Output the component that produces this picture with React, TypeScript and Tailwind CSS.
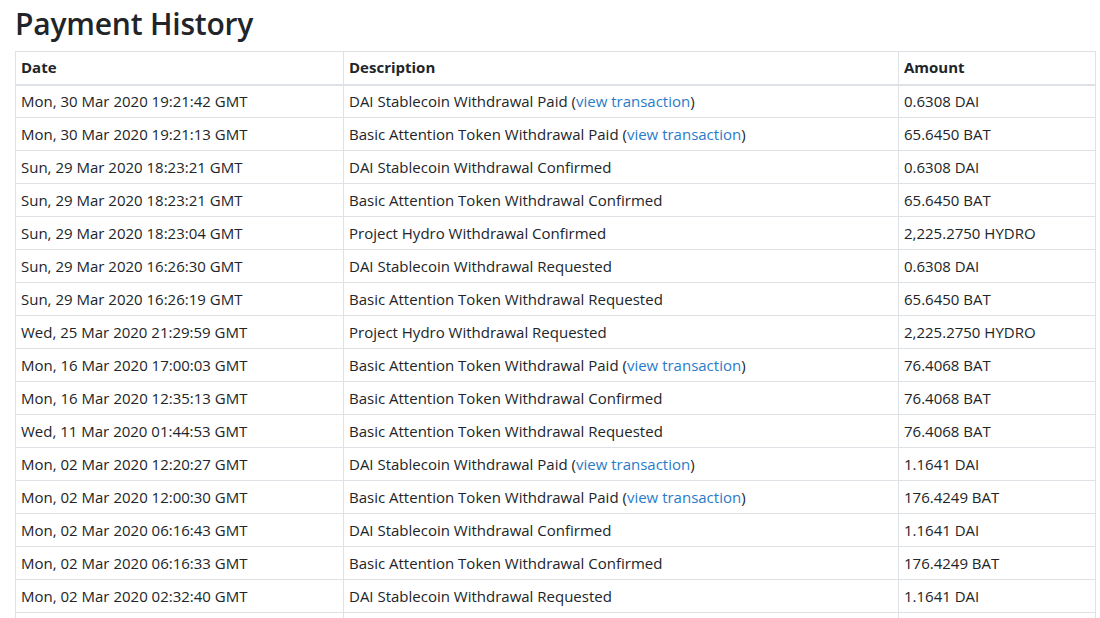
import React from "react";

type Row = { date: string; desc: string; link?: boolean; amount: string };

const rows: Row[] = [
  { date: "Mon, 30 Mar 2020 19:21:42 GMT", desc: "DAI Stablecoin Withdrawal Paid", link: true, amount: "0.6308 DAI" },
  { date: "Mon, 30 Mar 2020 19:21:13 GMT", desc: "Basic Attention Token Withdrawal Paid", link: true, amount: "65.6450 BAT" },
  { date: "Sun, 29 Mar 2020 18:23:21 GMT", desc: "DAI Stablecoin Withdrawal Confirmed", amount: "0.6308 DAI" },
  { date: "Sun, 29 Mar 2020 18:23:21 GMT", desc: "Basic Attention Token Withdrawal Confirmed", amount: "65.6450 BAT" },
  { date: "Sun, 29 Mar 2020 18:23:04 GMT", desc: "Project Hydro Withdrawal Confirmed", amount: "2,225.2750 HYDRO" },
  { date: "Sun, 29 Mar 2020 16:26:30 GMT", desc: "DAI Stablecoin Withdrawal Requested", amount: "0.6308 DAI" },
  { date: "Sun, 29 Mar 2020 16:26:19 GMT", desc: "Basic Attention Token Withdrawal Requested", amount: "65.6450 BAT" },
  { date: "Wed, 25 Mar 2020 21:29:59 GMT", desc: "Project Hydro Withdrawal Requested", amount: "2,225.2750 HYDRO" },
  { date: "Mon, 16 Mar 2020 17:00:03 GMT", desc: "Basic Attention Token Withdrawal Paid", link: true, amount: "76.4068 BAT" },
  { date: "Mon, 16 Mar 2020 12:35:13 GMT", desc: "Basic Attention Token Withdrawal Confirmed", amount: "76.4068 BAT" },
  { date: "Wed, 11 Mar 2020 01:44:53 GMT", desc: "Basic Attention Token Withdrawal Requested", amount: "76.4068 BAT" },
  { date: "Mon, 02 Mar 2020 12:20:27 GMT", desc: "DAI Stablecoin Withdrawal Paid", link: true, amount: "1.1641 DAI" },
  { date: "Mon, 02 Mar 2020 12:00:30 GMT", desc: "Basic Attention Token Withdrawal Paid", link: true, amount: "176.4249 BAT" },
  { date: "Mon, 02 Mar 2020 06:16:43 GMT", desc: "DAI Stablecoin Withdrawal Confirmed", amount: "1.1641 DAI" },
  { date: "Mon, 02 Mar 2020 06:16:33 GMT", desc: "Basic Attention Token Withdrawal Confirmed", amount: "176.4249 BAT" },
  { date: "Mon, 02 Mar 2020 02:32:40 GMT", desc: "DAI Stablecoin Withdrawal Requested", amount: "1.1641 DAI" },
];

export default function App() {
  return (
    <div
      className="w-[1100px] h-[618px] overflow-hidden bg-white px-[15px] pt-[4px] text-[#212529]"
      style={{ fontFamily: '"Open Sans", "Noto Sans", sans-serif' }}
    >
      <h2 className="text-[30px] font-semibold leading-[40px] mb-[7px] tracking-[-0.2px]">Payment History</h2>
      <table className="w-[1080px] border-collapse text-[15px] table-fixed">
        <colgroup>
          <col className="w-[328px]" />
          <col className="w-[555px]" />
          <col className="w-[197px]" />
        </colgroup>
        <thead>
          <tr className="h-[33px]">
            <th className="border border-[#dee2e6] border-b-2 text-left font-bold px-[5px] pb-[1px] align-middle">Date</th>
            <th className="border border-[#dee2e6] border-b-2 text-left font-bold px-[5px] pb-[1px] align-middle">Description</th>
            <th className="border border-[#dee2e6] border-b-2 text-left font-bold px-[5px] pb-[1px] align-middle">Amount</th>
          </tr>
        </thead>
        <tbody>
          {rows.map((r, i) => (
            <tr key={i} className="h-[33px]">
              <td className="border border-[#dee2e6] px-[5px] align-middle whitespace-nowrap">{r.date}</td>
              <td className="border border-[#dee2e6] px-[5px] align-middle whitespace-nowrap">
                {r.desc}
                {r.link && (
                  <>
                    {" ("}
                    <a href="#" className="text-[#2a7bc9]">view transaction</a>
                    {")"}
                  </>
                )}
              </td>
              <td className="border border-[#dee2e6] px-[5px] align-middle whitespace-nowrap">{r.amount}</td>
            </tr>
          ))}
          <tr className="h-[33px]">
            <td className="border border-[#dee2e6]" />
            <td className="border border-[#dee2e6]" />
            <td className="border border-[#dee2e6]" />
          </tr>
        </tbody>
      </table>
    </div>
  );
}
